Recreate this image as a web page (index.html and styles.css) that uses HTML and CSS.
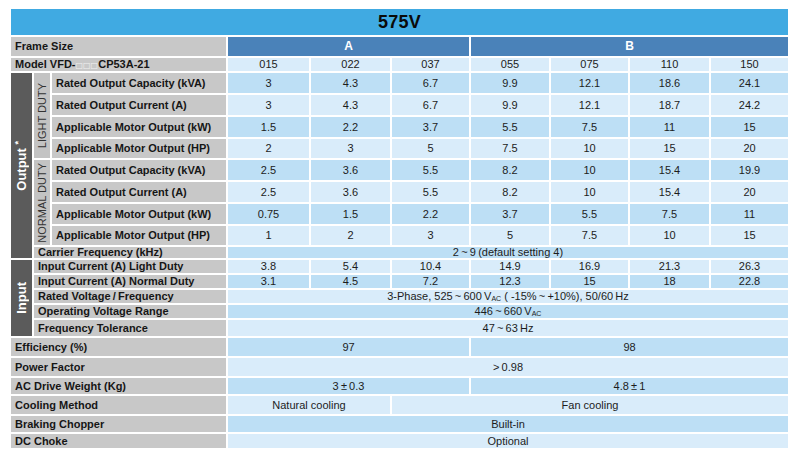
FILE: index.html
```html
<!DOCTYPE html>
<html lang="en">
<head>
<meta charset="utf-8">
<title>575V specifications</title>
<link rel="stylesheet" href="styles.css">
</head>
<body>
<table class="spec">
  <colgroup>
    <col class="c-grp"><col class="c-sub"><col class="c-label">
    <col class="c-d1"><col class="c-d2"><col class="c-d3"><col class="c-d4"><col class="c-d5"><col class="c-d6"><col class="c-d7">
  </colgroup>
  <tbody>
    <tr class="r-title"><td class="title" colspan="10">575V</td></tr>
    <tr class="r-frame">
      <td class="lbl" colspan="3">Frame Size</td>
      <td class="frame" colspan="3">A</td>
      <td class="frame" colspan="4">B</td>
    </tr>
    <tr class="r-model lt">
      <td class="lbl" colspan="3">Model VFD-<span class="box">□□□</span>CP53A-21</td>
      <td>015</td><td>022</td><td>037</td><td>055</td><td>075</td><td>110</td><td>150</td>
    </tr>

    <tr class="r-big dk">
      <td class="grp" rowspan="9"><div class="vt">Output <sup>*</sup></div></td>
      <td class="sub" rowspan="4"><div class="vt">LIGHT DUTY</div></td>
      <td class="lbl">Rated Output Capacity (kVA)</td>
      <td>3</td><td>4.3</td><td>6.7</td><td>9.9</td><td>12.1</td><td>18.6</td><td>24.1</td>
    </tr>
    <tr class="r-big lt">
      <td class="lbl">Rated Output Current (A)</td>
      <td>3</td><td>4.3</td><td>6.7</td><td>9.9</td><td>12.1</td><td>18.7</td><td>24.2</td>
    </tr>
    <tr class="r-big dk">
      <td class="lbl">Applicable Motor Output (kW)</td>
      <td>1.5</td><td>2.2</td><td>3.7</td><td>5.5</td><td>7.5</td><td>11</td><td>15</td>
    </tr>
    <tr class="r-big2 lt">
      <td class="lbl">Applicable Motor Output (HP)</td>
      <td>2</td><td>3</td><td>5</td><td>7.5</td><td>10</td><td>15</td><td>20</td>
    </tr>

    <tr class="r-big dk">
      <td class="sub" rowspan="4"><div class="vt">NORMAL DUTY</div></td>
      <td class="lbl">Rated Output Capacity (kVA)</td>
      <td>2.5</td><td>3.6</td><td>5.5</td><td>8.2</td><td>10</td><td>15.4</td><td>19.9</td>
    </tr>
    <tr class="r-big lt">
      <td class="lbl">Rated Output Current (A)</td>
      <td>2.5</td><td>3.6</td><td>5.5</td><td>8.2</td><td>10</td><td>15.4</td><td>20</td>
    </tr>
    <tr class="r-big dk">
      <td class="lbl">Applicable Motor Output (kW)</td>
      <td>0.75</td><td>1.5</td><td>2.2</td><td>3.7</td><td>5.5</td><td>7.5</td><td>11</td>
    </tr>
    <tr class="r-big2 lt">
      <td class="lbl">Applicable Motor Output (HP)</td>
      <td>1</td><td>2</td><td>3</td><td>5</td><td>7.5</td><td>10</td><td>15</td>
    </tr>
    <tr class="r-carrier dk">
      <td class="lbl" colspan="2">Carrier Frequency (kHz)</td>
      <td colspan="7">2&thinsp;~&thinsp;9&thinsp;(default setting 4)</td>
    </tr>

    <tr class="r-in lt">
      <td class="grp" rowspan="5"><div class="vt">Input</div></td>
      <td class="lbl" colspan="2">Input Current (A) Light Duty</td>
      <td>3.8</td><td>5.4</td><td>10.4</td><td>14.9</td><td>16.9</td><td>21.3</td><td>26.3</td>
    </tr>
    <tr class="r-in dk">
      <td class="lbl" colspan="2">Input Current (A) Normal Duty</td>
      <td>3.1</td><td>4.5</td><td>7.2</td><td>12.3</td><td>15</td><td>18</td><td>22.8</td>
    </tr>
    <tr class="r-in lt">
      <td class="lbl" colspan="2">Rated Voltage&thinsp;/&thinsp;Frequency</td>
      <td colspan="7">3-Phase, 525&thinsp;~&thinsp;600&thinsp;V<sub>AC</sub> ( -15%&thinsp;~&thinsp;+10%), 50/60&thinsp;Hz</td>
    </tr>
    <tr class="r-in dk">
      <td class="lbl" colspan="2">Operating Voltage Range</td>
      <td colspan="7">446&thinsp;~&thinsp;660&thinsp;V<sub>AC</sub></td>
    </tr>
    <tr class="r-in-last lt">
      <td class="lbl" colspan="2">Frequency Tolerance</td>
      <td colspan="7">47&thinsp;~&thinsp;63&thinsp;Hz</td>
    </tr>

    <tr class="r-b20 dk">
      <td class="lbl" colspan="3">Efficiency (%)</td>
      <td colspan="3">97</td><td colspan="4">98</td>
    </tr>
    <tr class="r-b20 lt">
      <td class="lbl" colspan="3">Power Factor</td>
      <td colspan="7">&gt;&thinsp;0.98</td>
    </tr>
    <tr class="r-b18 dk">
      <td class="lbl" colspan="3">AC Drive Weight (Kg)</td>
      <td colspan="3">3&thinsp;±&thinsp;0.3</td><td colspan="4">4.8&thinsp;±&thinsp;1</td>
    </tr>
    <tr class="r-b20 lt">
      <td class="lbl" colspan="3">Cooling Method</td>
      <td colspan="2">Natural cooling</td><td colspan="5">Fan cooling</td>
    </tr>
    <tr class="r-b18 dk">
      <td class="lbl" colspan="3">Braking Chopper</td>
      <td colspan="7">Built-in</td>
    </tr>
    <tr class="r-b16 lt">
      <td class="lbl" colspan="3">DC Choke</td>
      <td colspan="7">Optional</td>
    </tr>
  </tbody>
</table>
</body>
</html>
```

FILE: styles.css
```css
html, body {
  margin: 0;
  padding: 0;
  background: #ffffff;
}

body {
  font-family: "Liberation Sans", Arial, sans-serif;
  color: #1c1c1c;
}

.spec {
  margin: 9px 0 0 11px;
  width: 779px;
  table-layout: fixed;
  border-collapse: separate;
  border-spacing: 0;
  font-size: 11px;
  line-height: 11px;
}

.c-grp { width: 23px; }
.c-sub { width: 18px; }
.c-label { width: 176px; }
.c-d1 { width: 83px; }
.c-d2 { width: 81px; }
.c-d3 { width: 79px; }
.c-d4 { width: 80px; }
.c-d5 { width: 79px; }
.c-d6 { width: 81px; }
.c-d7 { width: 79px; }

.spec td {
  padding: 0;
  border-right: 2px solid #ffffff;
  border-bottom: 2px solid #ffffff;
  text-align: center;
  vertical-align: middle;
  white-space: nowrap;
  overflow: hidden;
}

.r-title { height: 28px; }
.r-frame { height: 21px; }
.r-model { height: 15px; }
.r-big { height: 22px; }
.r-big2 { height: 21px; }
.r-carrier { height: 13px; }
.r-in { height: 15px; }
.r-in-last { height: 18px; }
.r-b20 { height: 20px; }
.r-b18 { height: 18px; }
.r-b16 { height: 16px; }

.lt td { background: #d9ecfa; }
.dk td { background: #bddff5; }

.spec td.title {
  background: #40aae2;
  color: #0a0a0a;
  font-size: 18px;
  font-weight: bold;
  line-height: 20px;
  letter-spacing: 0.2px;
}

.spec td.frame {
  background: #4a82b9;
  color: #ffffff;
  font-weight: bold;
  font-size: 12px;
}

.spec td.lbl {
  background: #c8c8c8;
  color: #161616;
  font-weight: bold;
  text-align: left;
  padding-left: 4px;
}

.spec td.grp {
  background: #5b5b5b;
  color: #ffffff;
  font-weight: bold;
  font-size: 13px;
}

.spec td.sub {
  background: #c3c3c3;
  color: #333333;
}

.vt {
  writing-mode: vertical-rl;
  transform: rotate(180deg);
  margin: 0 auto;
  line-height: 14px;
}

.grp sup {
  font-size: 9px;
  vertical-align: 4px;
  line-height: 0;
}

.box {
  font-family: "DejaVu Sans", sans-serif;
  font-size: 8px;
  color: #f2f2f2;
  font-weight: normal;
}

sub {
  font-size: 7px;
  line-height: 0;
  vertical-align: -1px;
}
```
